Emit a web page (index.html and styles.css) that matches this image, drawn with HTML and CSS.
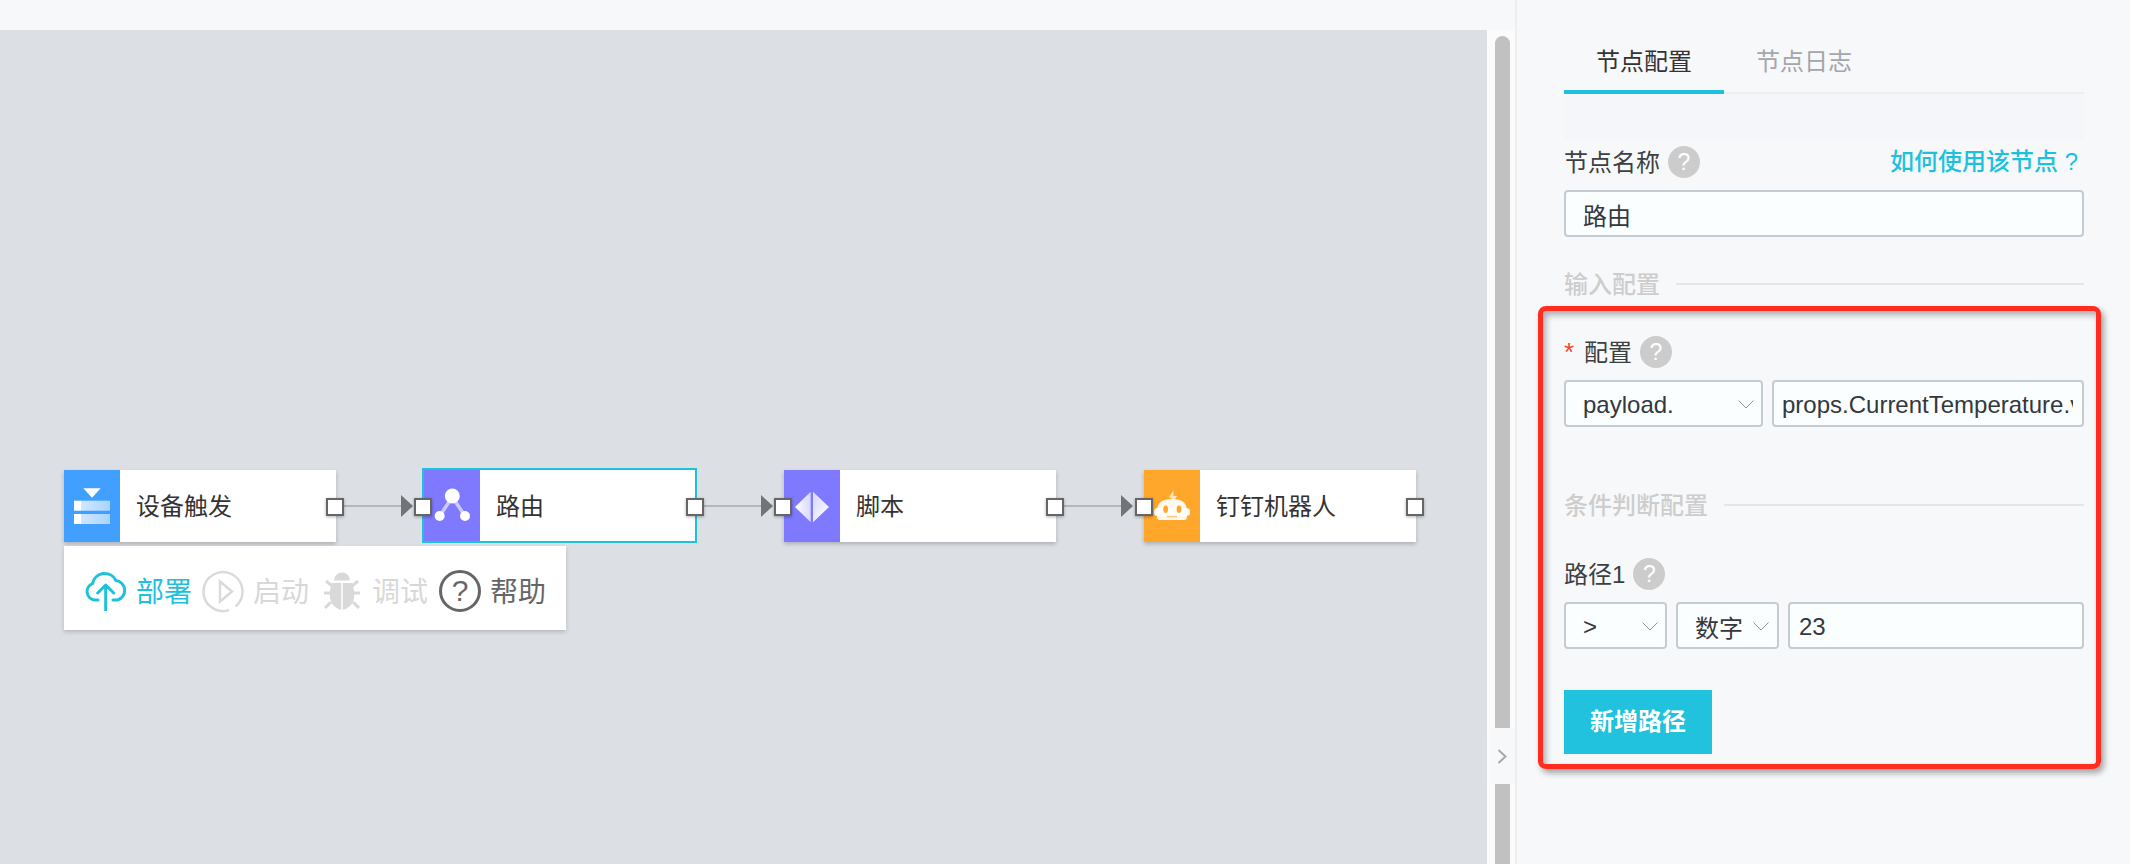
FILE: index.html
```html
<!DOCTYPE html>
<html lang="zh-CN">
<head>
<meta charset="utf-8">
<title>节点配置</title>
<link rel="stylesheet" href="styles.css">
</head>
<body>
<div class="page">
  <div class="main">
    <div class="topbar"></div>
    <div class="work">
      <div class="canvas">
        <div class="node n1">
          <div class="ico blue">
            <svg width="56" height="72" viewBox="0 0 56 72"><defs><linearGradient id="g1" x1="0" x2="1" y1="0" y2="0"><stop offset="0" stop-color="#fff" stop-opacity=".75"/><stop offset="1" stop-color="#fff" stop-opacity=".55"/></linearGradient></defs><path d="M19.3 18.3H36.7L28 27.7Z" fill="#fff"/><rect x="10" y="30.7" width="7" height="10" fill="#fff"/><rect x="17" y="30.7" width="29" height="10" fill="url(#g1)"/><rect x="10" y="44" width="7" height="10" fill="#fff"/><rect x="17" y="44" width="29" height="10" fill="url(#g1)"/></svg>
          </div>
          <div class="name">设备触发</div>
        </div>
        <div class="node n2">
          <div class="ico violet">
            <svg width="56" height="71" viewBox="0 0 56 71"><path d="M15.7 46 28.3 27 41 46" fill="none" stroke="#fff" stroke-opacity=".6" stroke-width="3.5"/><circle cx="28.3" cy="26" r="7.5" fill="#fff"/><circle cx="15.7" cy="46" r="5" fill="#fff"/><circle cx="41" cy="46" r="5" fill="#fff"/></svg>
          </div>
          <div class="name">路由</div>
        </div>
        <div class="node n3">
          <div class="ico violet">
            <svg width="56" height="72" viewBox="0 0 56 72"><defs><linearGradient id="g2" x1="0" x2="1" y1="0" y2="0"><stop offset="0" stop-color="#fff"/><stop offset="1" stop-color="#fff" stop-opacity=".7"/></linearGradient><linearGradient id="g3" x1="0" x2="1" y1="0" y2="1"><stop offset="0" stop-color="#fff" stop-opacity=".7"/><stop offset="1" stop-color="#fff"/></linearGradient></defs><path d="M26.7 21.7V52.3L11 37Z" fill="url(#g2)"/><path d="M29 21.7V52.3L45 37Z" fill="url(#g3)"/></svg>
          </div>
          <div class="name">脚本</div>
        </div>
        <div class="node n4">
          <div class="ico orange">
            <svg width="56" height="72" viewBox="0 0 56 72"><path d="M29.5 20.7 24.5 27.5H27.5L26.3 31H30L33 26H29.5Z" fill="#fff" fill-opacity=".7"/><path d="M15.5 50Q13 50 13 46V41Q13 29 28 29 43 29 43 41V46Q43 50 40.5 50Z" fill="#fff" fill-opacity=".92"/><rect x="10" y="38" width="36" height="8" rx="3.5" fill="#fff" fill-opacity=".92"/><ellipse cx="21.7" cy="39.3" rx="2.4" ry="3.8" fill="#ffa72a"/><ellipse cx="35" cy="39.3" rx="2.4" ry="3.8" fill="#ffa72a"/><path d="M23 46.6H33" stroke="#ffc778" stroke-width="1.6"/></svg>
          </div>
          <div class="name">钉钉机器人</div>
        </div>

        <div class="link l1"></div>
        <div class="link l2"></div>
        <div class="link l3"></div>

        <div class="port p1"></div>
        <div class="port p2"></div>
        <div class="port p3"></div>
        <div class="port p4"></div>
        <div class="port p5"></div>
        <div class="port p6"></div>
        <div class="port p7"></div>

        <div class="toolbar">
          <svg class="t-cloud" width="42" height="40" viewBox="0 0 42 40"><path d="M13 29H10A8.5 8.5 0 0 1 7.5 12.6 12.5 12.5 0 0 1 31 9.5 10 10 0 0 1 32.5 29H28M20.7 39V14M12.7 22 20.7 14 28.7 22" fill="none" stroke="#1ec1dd" stroke-width="3" stroke-linecap="round" stroke-linejoin="round"/></svg>
          <span class="t-text t-on t-deploy">部署</span>
          <svg class="t-play" width="42" height="43" viewBox="0 0 42 43"><path d="M27 40.1A19.5 19.5 0 1 1 33.5 36.5M18 11.5 30 21.5 18 31.5Z" fill="none" stroke="#dadada" stroke-width="2.5"/></svg>
          <span class="t-text t-off t-start">启动</span>
          <svg class="t-bug" width="38" height="40" viewBox="0 0 38 40"><path d="M11 9.5A8 8 0 0 1 27 9.5Z" fill="#d9d9d9"/><path d="M9 12H29Q32 20 31 27 29 37 19 39 9 37 7 27 6 20 9 12Z" fill="#d9d9d9"/><path d="M19 12V39" stroke="#fff" stroke-width="1.5"/><path d="M1 22H7M31 22H37M3 10 9 15M35 10 29 15M2 37 8 31M36 37 30 31" stroke="#d9d9d9" stroke-width="3" fill="none"/></svg>
          <span class="t-text t-off t-debug">调试</span>
          <span class="t-help">?</span>
          <span class="t-text t-dark t-helptext">帮助</span>
        </div>
      </div>
      <div class="track"><div class="thumb"></div></div>
      <div class="collapse">
        <svg width="10" height="15" viewBox="0 0 10 15"><path d="M1.5 1 8.5 7.5 1.5 14" fill="none" stroke="#a8a8a8" stroke-width="2"/></svg>
      </div>
    </div>
  </div>

  <aside class="panel">
    <div class="tabs">
      <div class="tab active">节点配置</div>
      <div class="tab">节点日志</div>
    </div>
    <div class="tabgap"></div>

    <div class="labelrow first">
      <span class="label">节点名称</span><span class="q">?</span>
      <a class="howto">如何使用该节点 ?</a>
    </div>
    <div class="ctl full"><span class="val">路由</span></div>

    <div class="section s-input"><span>输入配置</span><i></i></div>

    <div class="labelrow r-config">
      <span class="req">*</span><span class="label">配置</span><span class="q">?</span>
    </div>
    <div class="ctlrow">
      <div class="ctl w-payload"><span class="val">payload.</span><svg class="chev" width="16" height="9" viewBox="0 0 16 9"><path d="M.5.5 8 8 15.5.5" fill="none" stroke="#8f959c" stroke-width="1"/></svg></div>
      <div class="ctl grow tight"><span class="val clip">props.CurrentTemperature.value</span></div>
    </div>

    <div class="section s-cond"><span>条件判断配置</span><i></i></div>

    <div class="labelrow r-path">
      <span class="label">路径1</span><span class="q">?</span>
    </div>
    <div class="ctlrow">
      <div class="ctl w-op"><span class="val gt">&gt;</span><svg class="chev" width="16" height="9" viewBox="0 0 16 9"><path d="M.5.5 8 8 15.5.5" fill="none" stroke="#8f959c" stroke-width="1"/></svg></div>
      <div class="ctl w-type"><span class="val">数字</span><svg class="chev c-type" width="16" height="9" viewBox="0 0 16 9"><path d="M.5.5 8 8 15.5.5" fill="none" stroke="#8f959c" stroke-width="1"/></svg></div>
      <div class="ctl grow tight2"><span class="val">23</span></div>
    </div>

    <div class="addbtn">新增路径</div>

    <div class="redbox"></div>
  </aside>
</div>
</body>
</html>
```

FILE: styles.css
```css
* { box-sizing: border-box; }
html, body { margin: 0; padding: 0; }
body {
  width: 2130px;
  height: 864px;
  overflow: hidden;
  background: #f7f8fa;
  color: #333;
  font-family: "Liberation Sans", "Noto Sans CJK SC", sans-serif;
  font-size: 24px;
}
.page { display: flex; width: 2130px; height: 864px; }
.main { width: 1515px; display: flex; flex-direction: column; flex: none; }
.topbar { height: 30px; background: #f7f8fa; flex: none; }
.work { position: relative; flex: 1; display: flex; min-height: 0; }
.canvas { position: relative; flex: 1; background: #dcdfe4; }
.track { width: 28px; flex: none; background: #fbfbfb; padding: 6px 5px 0 8px; }
.thumb { height: 100%; background: #c1c1c1; border-radius: 8px 8px 0 0; }
.collapse {
  position: absolute;
  left: 1490px;
  top: 698px;
  width: 26px;
  height: 56px;
  background: #f7f8fa;
  display: flex;
  align-items: center;
  padding-left: 7px;
}

/* diagram */
.node {
  position: absolute;
  top: 440px;
  height: 72px;
  display: flex;
  background: #fff;
  box-shadow: 0 2px 4px rgba(0, 0, 0, .22);
}
.n1 { left: 64px; width: 272px; }
.n2 { left: 422px; width: 275px; top: 438px; height: 75px; border: 2.5px solid #1ec1dd; box-shadow: none; }
.n3 { left: 784px; width: 272px; }
.n4 { left: 1144px; width: 272px; }
.ico { width: 56px; flex: none; }
.ico svg { display: block; }
.blue { background: #41a0ff; }
.violet { background: #7e79ff; }
.orange { background: #ffa72a; }
.name { padding: 1px 0 0 16px; line-height: 71px; color: #333; white-space: nowrap; }
.port {
  position: absolute;
  top: 468px;
  width: 18px;
  height: 18px;
  background: #fff;
  border: 2.5px solid #666;
  box-shadow: 0 1px 3px rgba(0, 0, 0, .3);
}
.p1 { left: 326px; }
.p2 { left: 414px; }
.p3 { left: 686px; }
.p4 { left: 774px; }
.p5 { left: 1046px; }
.p6 { left: 1135px; }
.p7 { left: 1406px; }
.link { position: absolute; top: 475px; height: 2px; background: #b4b6b9; }
.link::after {
  content: "";
  position: absolute;
  right: -12px;
  top: -10px;
  border-left: 12px solid #707579;
  border-top: 11px solid transparent;
  border-bottom: 11px solid transparent;
}
.l1 { left: 344px; width: 57px; }
.l2 { left: 703px; width: 58px; }
.l3 { left: 1064px; width: 57px; }

.toolbar {
  position: absolute;
  left: 64px;
  top: 516px;
  width: 502px;
  height: 84px;
  padding-top: 6px;
  background: #fff;
  box-shadow: 0 2px 4px rgba(0, 0, 0, .18);
  display: flex;
  align-items: center;
}
.t-cloud { margin-left: 21px; flex: none; }
.t-text { font-size: 28px; line-height: 40px; padding-top: 4px; white-space: nowrap; flex: none; }
.t-on { color: #1ec1dd; }
.t-off { color: #d8d8d8; }
.t-dark { color: #666; }
.t-deploy { margin-left: 9px; }
.t-play { margin-left: 10px; flex: none; }
.t-start { margin-left: 9px; }
.t-bug { margin-left: 14px; flex: none; }
.t-debug { margin-left: 11px; }
.t-help {
  margin-left: 11px;
  width: 42px;
  height: 42px;
  flex: none;
  border: 3px solid #666;
  border-radius: 50%;
  color: #666;
  font-size: 30px;
  line-height: 36px;
  text-align: center;
}
.t-helptext { margin-left: 9px; }

/* panel */
.panel {
  position: relative;
  width: 615px;
  flex: none;
  background: #f7f8fa;
  border-left: 2px solid #eceef1;
  padding: 0 46px 0 47px;
}
.tabs { display: flex; height: 94px; border-bottom: 2px solid #eceef1; }
.tab {
  width: 160px;
  height: 94px;
  padding-top: 44px;
  text-align: center;
  line-height: 36px;
  color: #a3a6aa;
}
.tab.active { color: #333; border-bottom: 4px solid #1ec1dd; }
.tabgap { height: 46px; background: #f5f6fa; }
.labelrow { display: flex; align-items: center; height: 32px; }
.first { margin-top: 6px; }
.label { color: #3c4043; line-height: 32px; padding-top: 2px; white-space: nowrap; }
.q {
  width: 32px;
  height: 32px;
  margin-left: 8px;
  border-radius: 50%;
  background: #ccc;
  color: #fff;
  font-size: 23px;
  line-height: 32px;
  text-align: center;
  flex: none;
}
.howto {
  margin-left: auto;
  margin-right: 6px;
  padding-bottom: 5px;
  color: #1ec1dd;
  font-weight: 500;
  white-space: nowrap;
}
.ctl {
  position: relative;
  display: flex;
  align-items: center;
  height: 47px;
  margin-top: 12px;
  padding: 2px 0 0 17px;
  background: #fbfeff;
  border: 2px solid #c5cbd3;
  border-radius: 4px;
  color: #33383d;
  overflow: hidden;
  white-space: nowrap;
}
.full { width: 100%; }
.ctlrow { display: flex; gap: 9px; }
.w-payload { width: 199px; flex: none; }
.w-op { width: 103px; flex: none; }
.w-type { width: 103px; flex: none; }
.grow { flex: 1; min-width: 0; }
.tight { padding-left: 8px; }
.tight2 { padding-left: 9px; }
.val { display: block; }
.clip { overflow: hidden; width: 291px; flex: none; }
.gt { font-weight: 500; }
.chev { position: absolute; right: 7px; top: 18px; }
.c-type { right: 8px; }
.section { display: flex; align-items: center; height: 24px; color: #cdcdcd; font-weight: 500; }
.section span { padding-bottom: 4px; }
.section i { flex: 1; height: 2px; background: #e4e6ea; margin-left: 16px; }
.s-input { margin-top: 35px; }
.s-cond { margin-top: 66px; }
.r-config { margin-top: 40px; }
.r-path { margin-top: 41px; }
.req { width: 20px; color: #f4472e; font-size: 26px; line-height: 32px; flex: none; }
.addbtn {
  width: 148px;
  height: 64px;
  margin-top: 41px;
  background: #20c2de;
  color: #fff;
  font-weight: 700;
  line-height: 64px;
  text-align: center;
}
.redbox {
  position: absolute;
  left: 21px;
  top: 306px;
  width: 563px;
  height: 463px;
  border: 5.5px solid #ff2d1f;
  border-radius: 8px;
  box-shadow: 3px 4px 6px rgba(0, 0, 0, .35), inset 3px 4px 6px rgba(0, 0, 0, .3);
  pointer-events: none;
}
```
